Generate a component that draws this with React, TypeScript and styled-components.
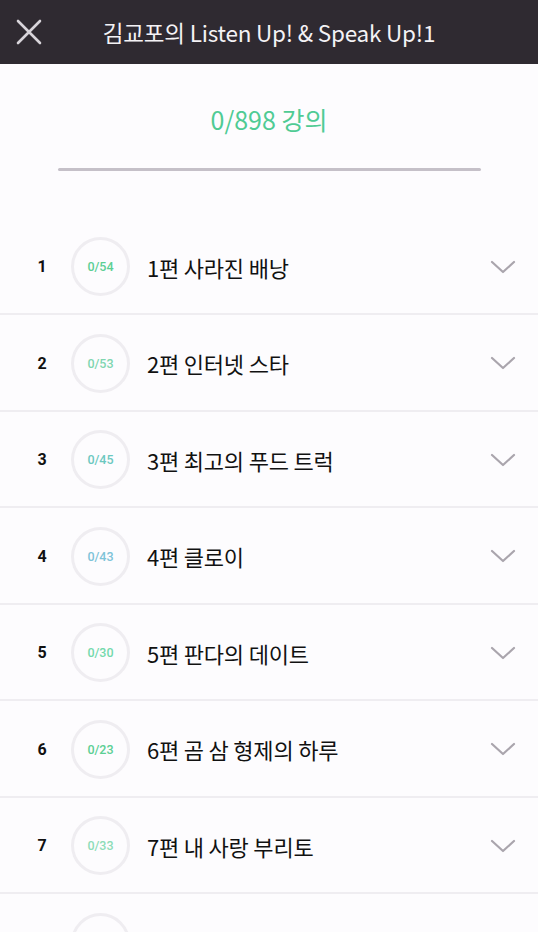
import React from "react";
import styled, { createGlobalStyle } from "styled-components";

const Global = createGlobalStyle`
  html, body { margin: 0; padding: 0; background: #fdfcfe; }
  body { font-family: "Noto Sans CJK KR", "Noto Sans", sans-serif; overflow: hidden; }
  * { box-sizing: border-box; }
`;

const Page = styled.div`
  width: 538px;
  height: 932px;
  overflow: hidden;
  background: #fdfcfe;
  display: flex;
  flex-direction: column;
`;

const Header = styled.header`
  height: 64px;
  flex: 0 0 64px;
  background: #2f2a31;
  display: grid;
  grid-template-columns: 56px 1fr 56px;
  align-items: center;
`;

const CloseBtn = styled.button`
  border: 0;
  background: transparent;
  padding: 0;
  margin-left: 14px;
  width: 30px;
  height: 30px;
  display: flex;
  align-items: center;
  justify-content: center;
`;

const Title = styled.h1`
  margin: 0;
  color: #f4f2f5;
  font-size: 22.5px;
  font-weight: 400;
  text-align: center;
  letter-spacing: -0.2px;
  white-space: nowrap;
`;

const Summary = styled.section`
  height: 154.5px;
  flex: 0 0 154.5px;
  display: flex;
  flex-direction: column;
  align-items: center;
  padding-top: 36px;
`;

const Count = styled.div`
  color: #4fcb94;
  font-size: 25px;
  line-height: 38px;
  font-weight: 400;
`;

const Track = styled.div`
  width: 423px;
  height: 3px;
  margin-top: 30px;
  border-radius: 2px;
  background: #c5c0c8;
`;

const List = styled.ul`
  list-style: none;
  margin: 0;
  padding: 0;
`;

const Row = styled.li`
  height: 96.5px;
  border-bottom: 2.5px solid #efedf1;
  display: flex;
  align-items: center;
  padding-top: 2px;
`;

const Num = styled.span`
  width: 30px;
  margin-left: 27px;
  text-align: center;
  font-family: "Roboto", "Noto Sans", sans-serif;
  font-weight: 700;
  font-size: 16px;
  color: #111;
`;

const Ring = styled.div<{ $color: string }>`
  width: 59px;
  height: 59px;
  margin-left: 14px;
  border-radius: 50%;
  border: 3px solid #efedf1;
  display: flex;
  align-items: center;
  justify-content: center;
  font-family: "Roboto", "Noto Sans", sans-serif;
  font-size: 12.5px;
  font-weight: 500;
  color: ${(p) => p.$color};
`;

const Name = styled.span`
  flex: 1;
  margin-left: 17px;
  font-size: 22px;
  font-weight: 400;
  color: #111;
  letter-spacing: -0.2px;
`;

const Chevron = styled.svg`
  margin-right: 22px;
`;

const items = [
  { n: 1, c: "0/54", t: "1편 사라진 배낭", col: "#5ccf94" },
  { n: 2, c: "0/53", t: "2편 인터넷 스타", col: "#7fd6b0" },
  { n: 3, c: "0/45", t: "3편 최고의 푸드 트럭", col: "#6cc8c0" },
  { n: 4, c: "0/43", t: "4편 클로이", col: "#7ec3d8" },
  { n: 5, c: "0/30", t: "5편 판다의 데이트", col: "#74d9ac" },
  { n: 6, c: "0/23", t: "6편 곰 삼 형제의 하루", col: "#5ccf94" },
  { n: 7, c: "0/33", t: "7편 내 사랑 부리토", col: "#8edcb8" },
  { n: 8, c: "", t: "", col: "#8edcb8" },
];

export default function App() {
  return (
    <Page>
      <Global />
      <Header>
        <CloseBtn aria-label="close">
          <svg width="28" height="28" viewBox="0 0 28 28">
            <path d="M3 3 L25 25 M25 3 L3 25" stroke="#d8d4da" strokeWidth="2.6" strokeLinecap="round" />
          </svg>
        </CloseBtn>
        <Title>김교포의 Listen Up! &amp; Speak Up!1</Title>
        <span />
      </Header>
      <Summary>
        <Count>0/898 강의</Count>
        <Track />
      </Summary>
      <List>
        {items.map((it) => (
          <Row key={it.n}>
            <Num>{it.c ? it.n : ""}</Num>
            <Ring $color={it.col}>{it.c}</Ring>
            <Name>{it.t}</Name>
            {it.c && (
              <Chevron width="26" height="16" viewBox="0 0 26 16">
                <path d="M2 3 L13 13 L24 3" fill="none" stroke="#aaa5ad" strokeWidth="2.2" strokeLinecap="round" strokeLinejoin="round" />
              </Chevron>
            )}
          </Row>
        ))}
      </List>
    </Page>
  );
}
